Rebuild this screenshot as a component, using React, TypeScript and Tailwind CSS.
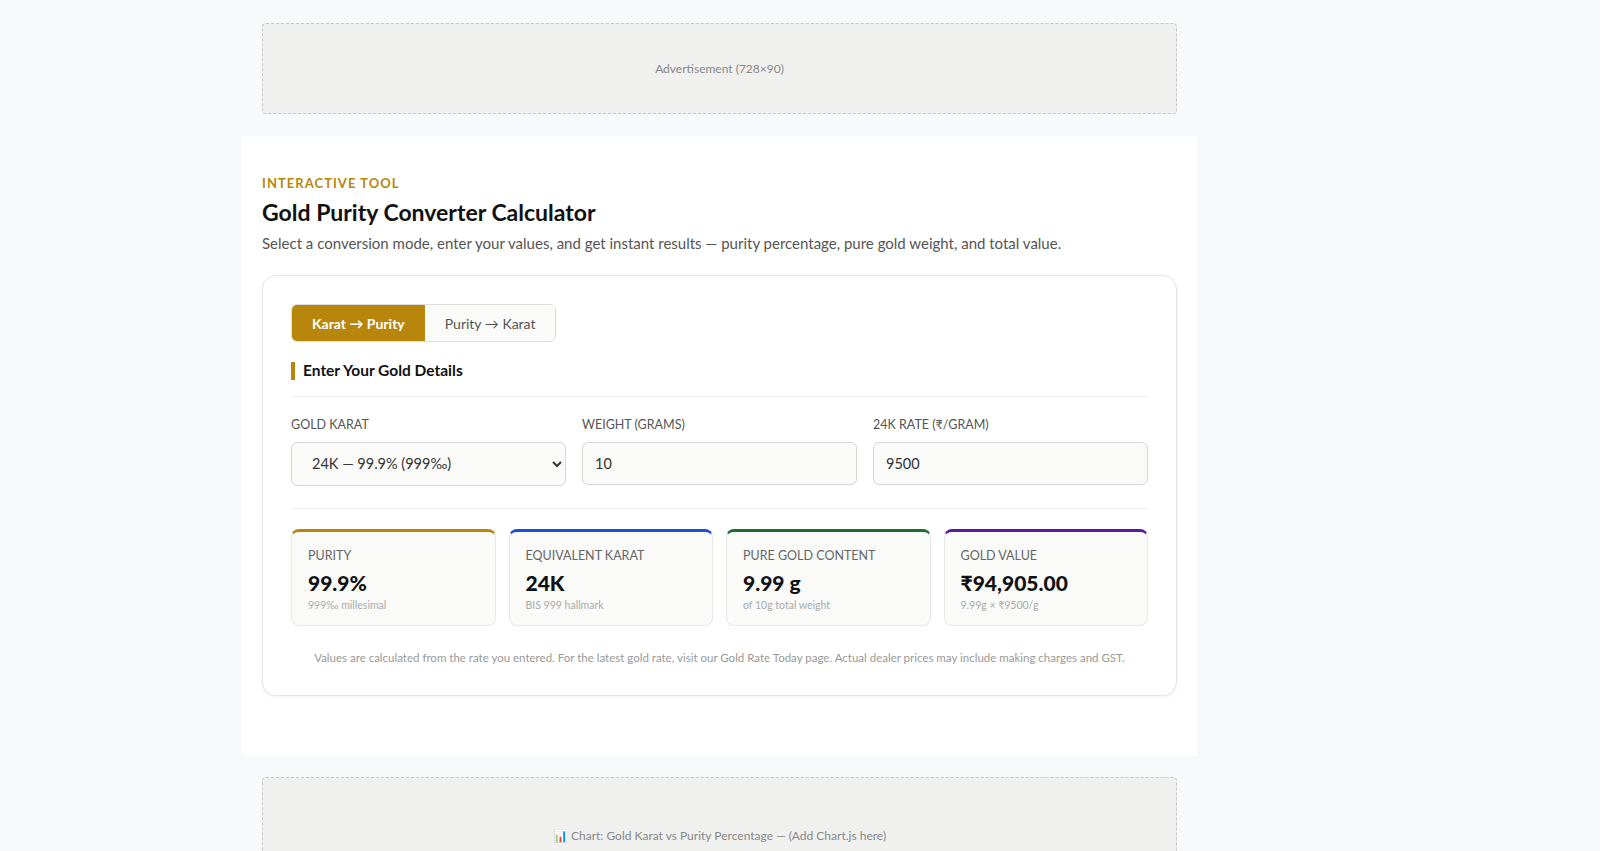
import React, { useState } from "react";

const results = [
  { label: "Purity", value: "99.9%", sub: "999‰ millesimal", border: "border-t-[#b8860b]" },
  { label: "Equivalent Karat", value: "24K", sub: "BIS 999 hallmark", border: "border-t-[#1d4ed8]" },
  { label: "Pure Gold Content", value: "9.99 g", sub: "of 10g total weight", border: "border-t-[#1f6b2a]" },
  { label: "Gold Value", value: "₹94,905.00", sub: "9.99g × ₹9500/g", border: "border-t-[#5b1a9e]" },
];

const App = () => {
  const [mode, setMode] = useState("k2p");

  return (
    <div className="min-h-[851px] bg-[#f8f9fb] font-[Lato,sans-serif] text-[#111]">
      <div className="w-[955px] ml-[242px]">
        <div className="pt-[23px] px-5">
          <div className="h-[91px] border border-dashed border-[#c8c8c8] bg-[#f0f0ef] rounded flex items-center justify-center text-[12px] text-[#888]">
            Advertisement (728×90)
          </div>
        </div>

        <section className="mt-[22px] bg-white px-5 pt-[38px] pb-[60px]">
          <div className="text-[13px] font-bold tracking-[0.08em] text-[#b8860b] uppercase">Interactive Tool</div>
          <h2 className="mt-[4px] text-[23px] font-bold leading-7">Gold Purity Converter Calculator</h2>
          <p className="mt-[6px] text-[15px] text-[#555]">
            Select a conversion mode, enter your values, and get instant results — purity percentage, pure gold weight, and total value.
          </p>

          <div className="mt-[21px] bg-white border border-[#e5e5e5] rounded-[14px] shadow-[0_1px_4px_rgba(0,0,0,0.05)] px-7 pt-7 pb-[28px]">
            <div className="inline-flex border border-[#ddd] rounded-md overflow-hidden">
              <button
                onClick={() => setMode("k2p")}
                className={`h-[36px] px-5 text-[14px] font-bold ${mode === "k2p" ? "bg-[#b8860b] text-white" : "bg-[#fafaf9] text-[#555]"}`}
              >
                Karat → Purity
              </button>
              <button
                onClick={() => setMode("p2k")}
                className={`h-[36px] px-5 text-[14px] ${mode === "p2k" ? "bg-[#b8860b] text-white font-bold" : "bg-[#fafaf9] text-[#555]"}`}
              >
                Purity → Karat
              </button>
            </div>

            <div className="mt-5 flex items-center gap-2 border-l-4 border-[#b8860b] pl-2 h-[18px]">
              <span className="text-[15.5px] font-bold">Enter Your Gold Details</span>
            </div>

            <div className="mt-[16px] border-t border-[#eee]" />

            <div className="mt-[19px] grid grid-cols-3 gap-4">
              <div>
                <label className="block text-[12.5px] text-[#555] uppercase">Gold Karat</label>
                <select className="mt-[7px] w-full h-[44px] border border-[#d6d6d6] rounded-md bg-[#fafaf9] px-4 text-[14.5px] text-[#333]">
                  <option>24K — 99.9% (999‰)</option>
                  <option>22K — 91.6% (916‰)</option>
                  <option>18K — 75.0% (750‰)</option>
                </select>
              </div>
              <div>
                <label className="block text-[12.5px] text-[#555] uppercase">Weight (grams)</label>
                <input defaultValue="10" className="mt-[7px] w-full h-[43px] border border-[#d6d6d6] rounded-md bg-[#fafaf9] px-3 text-[14.5px] text-[#333]" />
              </div>
              <div>
                <label className="block text-[12.5px] text-[#555] uppercase">24K Rate (₹/gram)</label>
                <input defaultValue="9500" className="mt-[7px] w-full h-[43px] border border-[#d6d6d6] rounded-md bg-[#fafaf9] px-3 text-[14.5px] text-[#333]" />
              </div>
            </div>

            <div className="mt-[22px] border-t border-[#eee]" />

            <div className="mt-5 grid grid-cols-4 gap-[13px]">
              {results.map((r) => (
                <div key={r.label} className={`h-[97px] border border-[#e8e8e8] border-t-[3px] ${r.border} rounded-lg bg-[#fafaf9] px-4 pt-[15px]`}>
                  <div className="text-[12.5px] text-[#666] uppercase">{r.label}</div>
                  <div className="mt-[5px] text-[21px] font-black leading-6">{r.value}</div>
                  <div className="mt-[3px] text-[10.5px] text-[#aaa]">{r.sub}</div>
                </div>
              ))}
            </div>

            <p className="mt-[22px] text-center text-[11.5px] leading-[19px] text-[#999]">
              Values are calculated from the rate you entered. For the latest gold rate, visit our Gold Rate Today page. Actual dealer prices may include making charges and GST.
            </p>
          </div>
        </section>

        <div className="pt-[21px] px-5">
          <div className="h-[91px] border border-dashed border-[#c8c8c8] bg-[#f0f0ef] rounded flex items-end justify-center pb-[22px] text-[12px] text-[#888]">
            📊 Chart: Gold Karat vs Purity Percentage — (Add Chart.js here)
          </div>
        </div>
      </div>
    </div>
  );
};

export default App;
